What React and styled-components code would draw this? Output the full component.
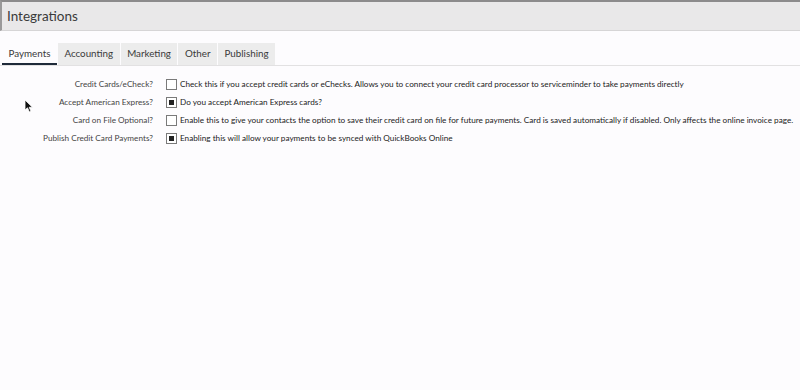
import React, { useState } from "react";
import styled, { createGlobalStyle } from "styled-components";

const GlobalStyle = createGlobalStyle`
    html, body {
        margin: 0;
        padding: 0;
        background: #fdfcfe;
        font-family: "Lato", "Noto Sans", sans-serif;
        color: #2a2a2a;
    }
`

const tabs = ["Payments", "Accounting", "Marketing", "Other", "Publishing"];

const settings = [
    { label: "Credit Cards/eCheck?", checked: false, text: "Check this if you accept credit cards or eChecks. Allows you to connect your credit card processor to serviceminder to take payments directly" },
    { label: "Accept American Express?", checked: true, text: "Do you accept American Express cards?" },
    { label: "Card on File Optional?", checked: false, text: "Enable this to give your contacts the option to save their credit card on file for future payments. Card is saved automatically if disabled. Only affects the online invoice page." },
    { label: "Publish Credit Card Payments?", checked: true, text: "Enabling this will allow your payments to be synced with QuickBooks Online" },
];

export default function App() {
    const [active, setActive] = useState("Payments");

    return (
        <Page>
            <GlobalStyle />
            <Header>
                <Title>Integrations</Title>
            </Header>

            <TabBar>
                {tabs.map((t) => (
                    <Tab key={t} $active={t === active} onClick={() => setActive(t)}>{t}</Tab>
                ))}
            </TabBar>

            <Form>
                {settings.map((s) => (
                    <Row key={s.label}>
                        <Label>{s.label}</Label>
                        <Box $checked={s.checked} />
                        <Help>{s.text}</Help>
                    </Row>
                ))}
            </Form>

            {/* mouse pointer left in the screenshot */}
            <Cursor width="9" height="14" viewBox="0 0 9 14">
                <path d="M1 1 L1 11 L3.5 8.8 L5.4 13 L7 12.3 L5.2 8.3 L8.4 8.2 Z" fill="#111" stroke="#fff" strokeWidth="0.8" />
            </Cursor>
        </Page>
    )
}

const Page = styled.div`
    position: relative;
    width: 800px;
    height: 390px;
    overflow: hidden;
`
const Header = styled.div`
    display: flex;
    align-items: center;
    height: 28px;
    background-color: #e9e8e9;
    border-top: 2px solid #8c8b8c;
    border-left: 2px solid #9a999a;
    border-bottom: 1px solid #d6d5d6;
    padding-left: 5px;
`
    const Title = styled.h1`
        margin: 0;
        font-size: 13.5px;
        font-weight: 400;
        color: #3a3a3a;
    `
const TabBar = styled.div`
    display: flex;
    gap: 1px;
    margin-top: 12px;
    padding-left: 2px;
    border-bottom: 1px solid #e2e1e2;
`
    const Tab = styled.div`
        height: 20px;
        line-height: 20px;
        padding: 0 6.5px;
        font-size: 9.8px;
        color: #3a3a3a;
        background-color: ${(p) => (p.$active ? "#fdfcfe" : "#ececec")};
        border-bottom: 2px solid ${(p) => (p.$active ? "#1f2a3a" : "transparent")};
        cursor: pointer;
    `
const Form = styled.div`
    display: flex;
    flex-direction: column;
    padding-top: 9px;
`
    const Row = styled.div`
        display: grid;
        grid-template-columns: 153px auto 1fr;
        align-items: center;
        height: 18px;
    `
    const Label = styled.span`
        justify-self: end;
        text-align: right;
        font-size: 8.2px;
        color: #444;
    `
    const Box = styled.span`
        box-sizing: border-box;
        width: 11px;
        height: 11px;
        margin-left: 13px;
        border: 1px solid #7a7a7a;
        background: #fff;
        display: flex;
        align-items: center;
        justify-content: center;
        &::after {
            content: "";
            display: ${(p) => (p.$checked ? "block" : "none")};
            width: 5px;
            height: 5px;
            background: #222;
        }
    `
    const Help = styled.span`
        padding-left: 3px;
        font-size: 8.2px;
        color: #222;
        white-space: nowrap;
    `
const Cursor = styled.svg`
    position: absolute;
    left: 24px;
    top: 99px;
`
